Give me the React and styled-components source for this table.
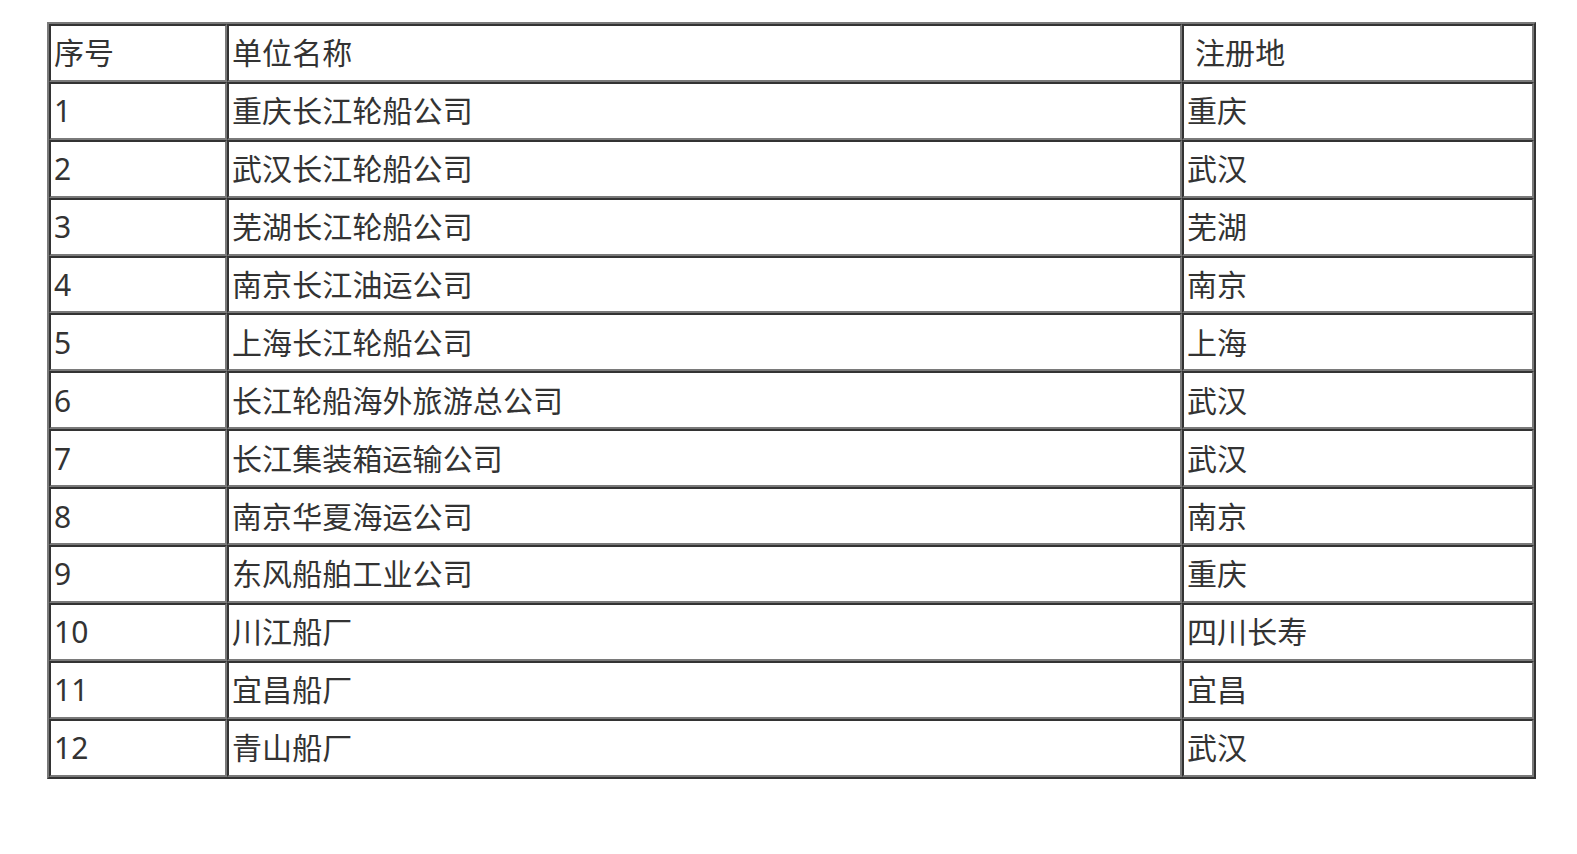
import React from "react";
import styled, { createGlobalStyle } from "styled-components";

const GlobalStyle = createGlobalStyle`
  html, body {
    margin: 0;
    padding: 0;
    background: #ffffff;
  }
  body {
    font-family: "Noto Sans", "Noto Sans CJK SC", sans-serif;
    color: #333333;
  }
`;

const Page = styled.div`
  padding: 22px 0 0 47px;
`;

const Table = styled.table`
  width: 1489px;
  border-collapse: separate;
  border-spacing: 0;
  border-style: solid;
  border-width: 2px;
  border-color: #7a7a7a #333333 #333333 #7a7a7a;
  font-size: 30px;
  font-family: "Noto Sans", "Noto Sans CJK SC", sans-serif;
  color: #333333;
  table-layout: fixed;
`;

const Row = styled.tr`
  height: 57.9px;
`;

const Cell = styled.td`
  border-style: solid;
  border-width: 2px;
  border-color: #333333 #7a7a7a #7a7a7a #333333;
  padding: 0 2px 0 ${(p) => (p.$indent ? "11px" : "3px")};
  vertical-align: middle;
  line-height: 1.3;
  white-space: nowrap;
  box-sizing: border-box;
  letter-spacing: 0.1px;
`;

const rows = [
  ["1", "重庆长江轮船公司", "重庆"],
  ["2", "武汉长江轮船公司", "武汉"],
  ["3", "芜湖长江轮船公司", "芜湖"],
  ["4", "南京长江油运公司", "南京"],
  ["5", "上海长江轮船公司", "上海"],
  ["6", "长江轮船海外旅游总公司", "武汉"],
  ["7", "长江集装箱运输公司", "武汉"],
  ["8", "南京华夏海运公司", "南京"],
  ["9", "东风船舶工业公司", "重庆"],
  ["10", "川江船厂", "四川长寿"],
  ["11", "宜昌船厂", "宜昌"],
  ["12", "青山船厂", "武汉"],
];

export default function App() {
  return (
    <>
      <GlobalStyle />
      <Page>
        <Table>
          <colgroup>
            <col style={{ width: "178px" }} />
            <col style={{ width: "955px" }} />
            <col style={{ width: "352px" }} />
          </colgroup>
          <tbody>
            <Row>
              <Cell>序号</Cell>
              <Cell>单位名称</Cell>
              <Cell $indent>注册地</Cell>
            </Row>
            {rows.map((r) => (
              <Row key={r[0]}>
                <Cell>{r[0]}</Cell>
                <Cell>{r[1]}</Cell>
                <Cell>{r[2]}</Cell>
              </Row>
            ))}
          </tbody>
        </Table>
      </Page>
    </>
  );
}
